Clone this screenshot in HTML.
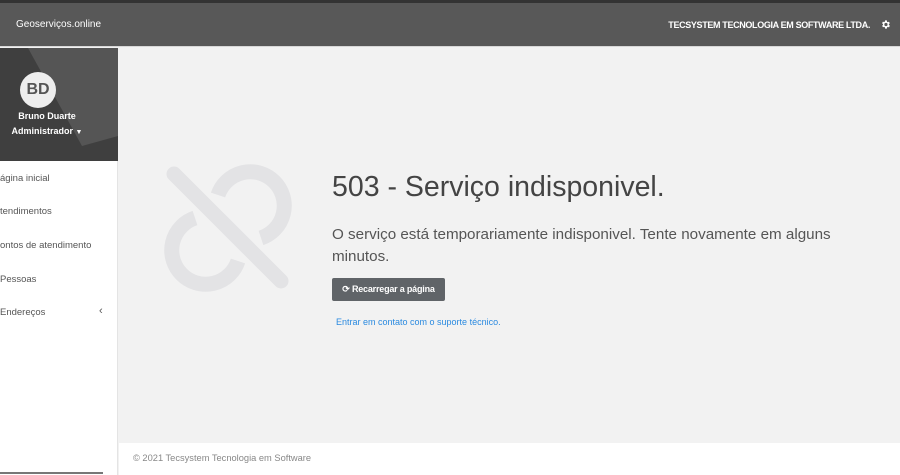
<!DOCTYPE html><html><head><meta charset="utf-8"><style>
*{margin:0;padding:0;box-sizing:border-box}
body{width:900px;height:475px;overflow:hidden;font-family:"Liberation Sans",sans-serif;background:#f2f2f2;position:relative}
.top{position:absolute;left:0;top:0;width:900px;height:3px;background:#333}
.hdr{position:absolute;left:0;top:3px;width:900px;height:44px;background:#585858;border-bottom:1px solid #d8d8d8}
.hdr .l{position:absolute;left:16px;top:16px;color:#fff;font-size:10px}
.hdr .r{position:absolute;right:30px;top:17px;color:#fff;font-size:9px;font-weight:bold;letter-spacing:-.35px}
.side{position:absolute;left:0;top:48px;width:118px;height:427px;background:#fff;border-right:1px solid #e4e4e4}
.prof{position:absolute;left:0;top:0;width:118px;height:113px;background:#3f3f3f;overflow:hidden}
.av{position:absolute;left:20px;top:24px;width:36px;height:36px;border-radius:50%;background:#eee;color:#555;font-weight:bold;font-size:16px;text-align:center;line-height:36px}
.nm{position:absolute;left:0;width:118px;text-align:center;color:#fff;font-size:9px;font-weight:bold}
.m{position:absolute;left:0;font-size:9.5px;color:#555}
.main h1{position:absolute;left:332px;top:171px;font-size:28.5px;font-weight:normal;color:#444}
.main p{position:absolute;left:332px;top:224px;width:530px;font-size:15.2px;line-height:22px;color:#555}
.btn{position:absolute;left:332px;top:278px;width:113px;height:23px;background:#606468;border-radius:2px;color:#fff;font-size:9px;font-weight:bold;line-height:23px;text-align:center;letter-spacing:-.2px}
.lnk{position:absolute;left:336px;top:317px;font-size:9px;color:#2a8ae0}
.ft{position:absolute;left:119px;top:443px;width:781px;height:32px;background:#fff;color:#888;font-size:9.3px;padding:10px 0 0 14px}
</style></head><body>
<div class="top"></div>
<div class="hdr"><div class="l">Geoserviços.online</div><div class="r">TECSYSTEM TECNOLOGIA EM SOFTWARE LTDA.</div>
<svg style="position:absolute;right:9px;top:16px" width="11" height="11" viewBox="0 0 24 24"><path fill="#fff" d="M19.4 13a7.5 7.5 0 0 0 0-2l2.1-1.6-2-3.5-2.5 1a7 7 0 0 0-1.7-1L15 3h-4l-.4 2.8a7 7 0 0 0-1.7 1l-2.5-1-2 3.5L6.6 11a7.5 7.5 0 0 0 0 2l-2.1 1.6 2 3.5 2.5-1a7 7 0 0 0 1.7 1L11 21h4l.4-2.8a7 7 0 0 0 1.7-1l2.5 1 2-3.5zM13 15.5a3.5 3.5 0 1 1 0-7 3.5 3.5 0 0 1 0 7z"/></svg></div>
<div class="side"><div class="prof"><svg style="position:absolute;left:0;top:0" width="118" height="113"><polygon points="28,0 118,0 118,88 82,98" fill="#555"/></svg>
<div class="av">BD</div><div class="nm" style="top:63px;left:-12px">Bruno Duarte</div><div class="nm" style="top:78px;left:-12px">Administrador <span style="font-size:7px">▼</span></div></div>
<div class="m" style="top:125px">ágina inicial</div><div class="m" style="top:158px">tendimentos</div><div class="m" style="top:192px">ontos de atendimento</div><div class="m" style="top:226px">Pessoas</div><div class="m" style="top:259px">Endereços</div><div class="m" style="top:257px;left:99px;font-size:11px">‹</div>
<div style="position:absolute;left:0;top:424px;width:103px;height:2px;background:#777"></div></div>
<svg style="position:absolute;left:150px;top:150px" width="160" height="160"><g stroke="#e3e3e5" stroke-width="15" fill="none"><line x1="24" y1="24" x2="131" y2="131" stroke-linecap="round"/><path d="M68 45 A34 34 0 1 1 111 88"/><path d="M45 68 A34 34 0 1 0 88 111"/></g></svg>
<div class="main"><h1>503 - Serviço indisponivel.</h1><p>O serviço está temporariamente indisponivel. Tente novamente em alguns minutos.</p><div class="btn">⟳ Recarregar a página</div><div class="lnk">Entrar em contato com o suporte técnico.</div></div>
<div class="ft">© 2021 Tecsystem Tecnologia em Software</div>
</body></html>
